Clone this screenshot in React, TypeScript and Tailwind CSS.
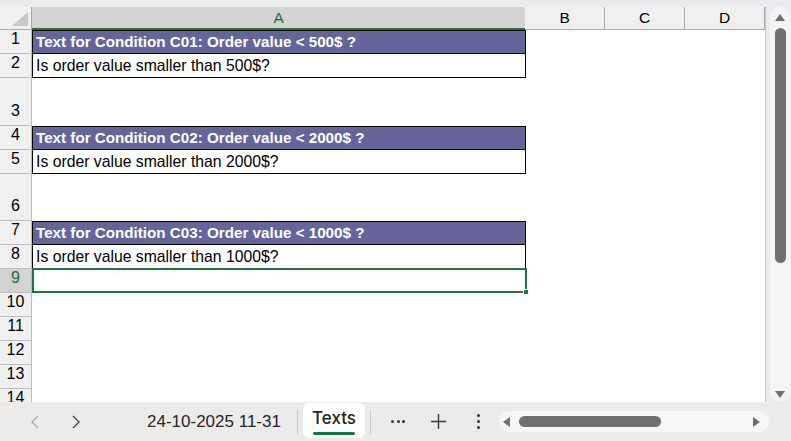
import React from "react";

type Row = { n: number; h: number; kind: "head" | "text" | "empty" | "selected"; text?: string };

const rows: Row[] = [
  { n: 1, h: 24, kind: "head", text: "Text for Condition C01: Order value < 500$ ?" },
  { n: 2, h: 24, kind: "text", text: "Is order value smaller than 500$?" },
  { n: 3, h: 48, kind: "empty" },
  { n: 4, h: 24, kind: "head", text: "Text for Condition C02: Order value < 2000$ ?" },
  { n: 5, h: 24, kind: "text", text: "Is order value smaller than 2000$?" },
  { n: 6, h: 47, kind: "empty" },
  { n: 7, h: 24, kind: "head", text: "Text for Condition C03: Order value < 1000$ ?" },
  { n: 8, h: 24, kind: "text", text: "Is order value smaller than 1000$?" },
  { n: 9, h: 24, kind: "selected" },
  { n: 10, h: 24, kind: "empty" },
  { n: 11, h: 24, kind: "empty" },
  { n: 12, h: 24, kind: "empty" },
  { n: 13, h: 24, kind: "empty" },
  { n: 14, h: 24, kind: "empty" },
];

const font = { fontFamily: '"Liberation Sans", Arial, sans-serif' };

function Cell({ row }: { row: Row }) {
  if (row.kind === "head") {
    return (
      <div className="w-[494px] h-full bg-[#65659a] border border-black flex items-center pl-[3px] text-white font-bold text-[15.2px] whitespace-nowrap">
        {row.text}
      </div>
    );
  }
  if (row.kind === "text") {
    return (
      <div className="w-[494px] h-full bg-white border-x border-b border-black flex items-center pl-[3px] text-[15.75px] text-black whitespace-nowrap">
        {row.text}
      </div>
    );
  }
  if (row.kind === "selected") {
    return (
      <div className="relative w-[495px] h-[25px] -mt-px border-2 border-[#217346]">
        <div className="absolute -right-[4px] -bottom-[4px] w-[6px] h-[6px] bg-[#217346] border border-white" />
      </div>
    );
  }
  return <div className="w-[494px] h-full" />;
}

function Dots({ vertical }: { vertical?: boolean }) {
  return (
    <div className={`flex ${vertical ? "flex-col gap-[3px]" : "gap-[2.5px]"}`}>
      <div className="w-[3px] h-[3px] rounded-full bg-[#333]" />
      <div className="w-[3px] h-[3px] rounded-full bg-[#333]" />
      <div className="w-[3px] h-[3px] rounded-full bg-[#333]" />
    </div>
  );
}

export default function App() {
  return (
    <div className="w-[791px] h-[441px] overflow-hidden bg-[#e9ebee] flex flex-col select-none" style={font}>
      <div className="flex flex-1 min-h-0 pt-[7px]">
        {/* sheet grid */}
        <div className="w-[766px] bg-white flex flex-col overflow-hidden border-r border-[#c6c6c6]">
          {/* column headers */}
          <div className="flex h-[23px] shrink-0 text-[15.5px]">
            <div className="w-[32px] h-full bg-[#f0f0f0] border-r border-b border-[#a9a9a9] relative">
              <svg className="absolute right-[3px] bottom-[3px]" width="16" height="14" viewBox="0 0 16 14">
                <polygon points="16,0 16,14 0,14" fill="#c8c8c8" />
              </svg>
            </div>
            <div className="w-[494px] h-full bg-[#d3d3d3] border-b-2 border-[#217346] flex items-center justify-center text-[#1e6b3a]">
              A
            </div>
            {["B", "C", "D"].map((c) => (
              <div key={c} className="w-[80px] h-full bg-[#f0f0f0] border-r border-b border-[#a9a9a9] flex items-center justify-center text-black">
                {c}
              </div>
            ))}
            <div className="flex-1 h-full bg-[#f0f0f0] border-b border-[#a9a9a9]" />
          </div>
          {/* rows */}
          {rows.map((r) => (
            <div key={r.n} className="flex shrink-0" style={{ height: r.h }}>
              <div
                className={`w-[32px] h-full border-r border-b border-[#bdbdbd] flex items-end justify-center pb-[2px] text-[16px] ${
                  r.kind === "selected" ? "bg-[#d3d3d3] text-[#1e6b3a]" : "bg-[#f0f0f0] text-black"
                }`}
              >
                {r.n}
              </div>
              <Cell row={r} />
            </div>
          ))}
        </div>
        {/* vertical scrollbar */}
        <div className="w-[25px] flex justify-center pl-[3px]">
          <div className="w-[21px] h-full bg-[#f4f4f4] rounded-[10px] flex flex-col items-center pt-[7px] pb-[4px]">
            <svg width="10" height="7" viewBox="0 0 10 7">
              <polygon points="5,0 10,7 0,7" fill="#6e6e6e" />
            </svg>
            <div className="w-[11px] h-[235px] mt-[7px] bg-[#707070] rounded-full" />
            <div className="flex-1" />
            <svg width="10" height="7" viewBox="0 0 10 7">
              <polygon points="0,0 10,0 5,7" fill="#6e6e6e" />
            </svg>
          </div>
        </div>
      </div>
      {/* sheet tabs bar */}
      <div className="h-[39px] shrink-0 bg-[#ecebea] flex items-center">
        <svg className="ml-[31px] shrink-0" width="8" height="14" viewBox="0 0 8 14">
          <polyline points="7,1 1,7 7,13" fill="none" stroke="#a8a8a8" strokeWidth="1.3" />
        </svg>
        <svg className="ml-[33px] shrink-0" width="8" height="14" viewBox="0 0 8 14">
          <polyline points="1,1 7,7 1,13" fill="none" stroke="#424242" strokeWidth="1.3" />
        </svg>
        <div className="ml-[67px] w-[138px] shrink-0 text-[17px] text-[#262626] whitespace-nowrap">24-10-2025 11-31</div>
        <div className="ml-[12px] w-px h-[24px] bg-[#c8c8c8]" />
        <div className="ml-[5px] w-[62px] h-[35px] self-end mb-[3px] bg-white rounded-[6px] flex flex-col items-center justify-center">
          <span
            className="text-[17px] text-[#242424] leading-none mt-[3px]"
            style={{ fontFamily: 'Inter, "Liberation Sans", sans-serif', fontWeight: 500 }}
          >
            Texts
          </span>
          <div className="w-[42px] h-[3px] bg-[#117c41] mt-[5px] rounded-full" />
        </div>
        <div className="ml-[5px] w-px h-[24px] bg-[#c8c8c8]" />
        <div className="ml-[20px]">
          <Dots />
        </div>
        <svg className="ml-[26px] shrink-0" width="15" height="15" viewBox="0 0 15 15">
          <path d="M7.5 0v15M0 7.5h15" stroke="#333" strokeWidth="1.4" />
        </svg>
        <div className="ml-[31px]">
          <Dots vertical />
        </div>
        <div className="ml-[19px] w-[270px] shrink-0 h-[21px] bg-[#f6f6f6] rounded-full flex items-center px-[4px]">
          <svg width="7" height="10" viewBox="0 0 7 10">
            <polygon points="7,0 7,10 0,5" fill="#6e6e6e" />
          </svg>
          <div className="ml-[9px] w-[142px] h-[11px] bg-[#707070] rounded-full" />
          <div className="flex-1" />
          <svg width="7" height="10" viewBox="0 0 7 10">
            <polygon points="0,0 0,10 7,5" fill="#6e6e6e" />
          </svg>
          <div className="w-[5px]" />
        </div>
      </div>
    </div>
  );
}
